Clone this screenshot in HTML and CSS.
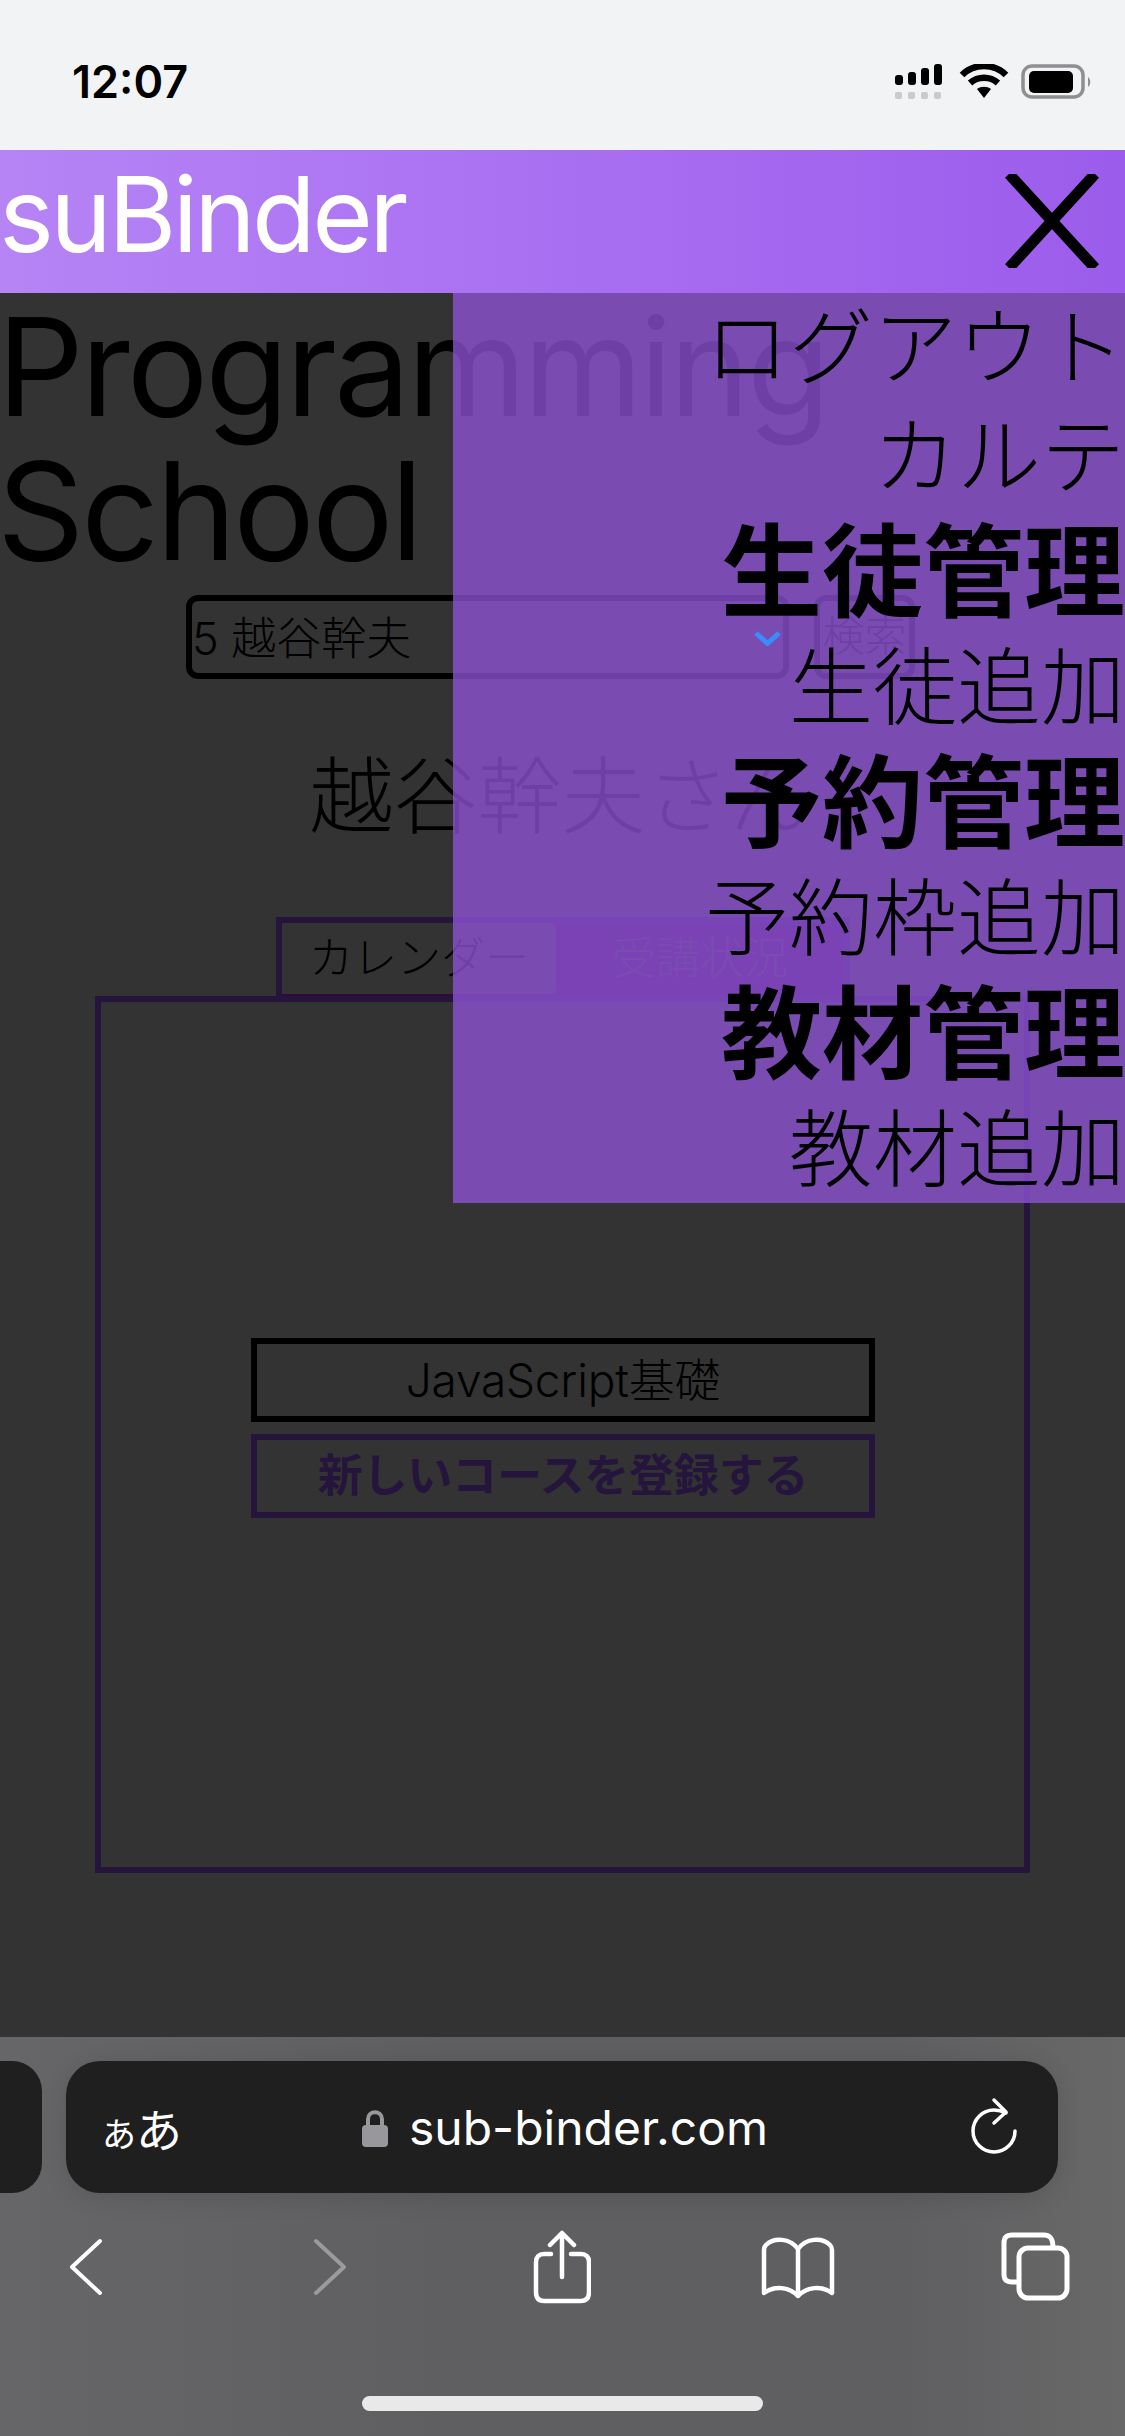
FILE: index.html
```html
<!DOCTYPE html>
<html lang="ja">
<head>
	<meta charset="utf-8">
	<title>suBinder</title>
	<link rel="stylesheet" href="styles.css">
</head>
<body>
	<div class="status">
		<span class="time">12:07</span>
		<svg class="status-icons" width="196" height="36" viewBox="0 0 196 36">
			<g fill="#000">
				<rect x="0" y="11" width="8" height="10" rx="3"/>
				<rect x="13" y="8" width="8" height="13" rx="3"/>
				<rect x="26" y="4" width="8" height="17" rx="3"/>
				<rect x="39" y="0" width="8" height="21" rx="3"/>
			</g>
			<g fill="#c9cacc">
				<rect x="0" y="28" width="7" height="7" rx="2"/>
				<rect x="13" y="28" width="7" height="7" rx="2"/>
				<rect x="26" y="28" width="7" height="7" rx="2"/>
				<rect x="39" y="28" width="7" height="7" rx="2"/>
			</g>
			<g fill="none" stroke="#000" stroke-width="6.5">
				<path d="M67 11 C79 -1 99 -1 111 11"/>
				<path d="M75 19 C83 12 95 12 103 19"/>
			</g>
			<path d="M82 25 C86 22 92 22 96 25 L89 34 Z" fill="#000"/>
			<rect x="128" y="2" width="60" height="31" rx="9" fill="none" stroke="#8f8f91" stroke-width="3.5"/>
			<rect x="134" y="7" width="44" height="22" rx="5" fill="#000"/>
			<path d="M193 13 C196 15 196 21 193 23 Z" fill="#8f8f91"/>
		</svg>
	</div>

	<header class="topbar">
		<span class="logo">suBinder</span>
		<svg class="close" width="94" height="94" viewBox="0 0 94 94">
			<path d="M4 0 L90 94 M90 0 L4 94" stroke="#000" stroke-width="11" fill="none"/>
		</svg>
	</header>

	<main class="page">
		<h1 class="title">Programming School</h1>
		<div class="search">
			<div class="select">5 越谷幹夫
				<svg class="select-arrow" width="27" height="15" viewBox="0 0 27 15">
					<path d="M2 2 L13.5 12.5 L25 2" fill="none" stroke="#3a8cf8" stroke-width="5"/>
				</svg>
			</div>
			<div class="search-btn">検索</div>
		</div>
		<h2 class="student">越谷幹夫さん</h2>
		<div class="tabs">
			<div class="tab tab-on">カレンダー</div>
			<div class="tab">受講状況</div>
		</div>
		<section class="panel">
			<div class="course">JavaScript基礎</div>
			<div class="course course-new">新しいコースを登録する</div>
		</section>

		<nav class="menu">
			<a>ログアウト</a>
			<a>カルテ</a>
			<a class="menu-head">生徒管理</a>
			<a>生徒追加</a>
			<a class="menu-head">予約管理</a>
			<a>予約枠追加</a>
			<a class="menu-head">教材管理</a>
			<a>教材追加</a>
		</nav>
	</main>

	<footer class="toolbar">
		<div class="address">
			<div class="pill-prev"></div>
			<div class="pill">
				<span class="aa"><small>あ</small>あ</span>
				<svg class="lock" width="26" height="38" viewBox="0 0 26 38">
					<path d="M6 17 V10 C6 1 20 1 20 10 V17" fill="none" stroke="#98989c" stroke-width="4"/>
					<rect x="0" y="16" width="26" height="22" rx="4" fill="#98989c"/>
				</svg>
				<span class="url">sub-binder.com</span>
				<svg class="reload" width="50" height="60" viewBox="0 0 50 60">
					<g fill="none" stroke="#fff" stroke-width="3.5" stroke-linecap="round" stroke-linejoin="round">
						<path d="M36 18 C32 16 28 15 24 15 A21 21 0 1 0 45 36"/>
						<path d="M24 5 L36 17 L24 28"/>
					</g>
				</svg>
			</div>
		</div>
		<div class="nav">
			<svg class="nav-back" width="34" height="58" viewBox="0 0 34 58">
				<path d="M31 3 L3 29 L31 55" fill="none" stroke="#fff" stroke-width="4" stroke-linecap="round" stroke-linejoin="round"/>
			</svg>
			<svg class="nav-forward" width="34" height="58" viewBox="0 0 34 58">
				<path d="M3 3 L31 29 L3 55" fill="none" stroke="#9b9b9c" stroke-width="4" stroke-linecap="round" stroke-linejoin="round"/>
			</svg>
			<svg class="nav-share" width="58" height="74" viewBox="0 0 58 74">
				<g fill="none" stroke="#fff" stroke-width="4.5" stroke-linecap="round" stroke-linejoin="round">
					<path d="M18 24 H11 C6 24 3 27 3 32 V62 C3 68 6 71 11 71 H48 C53 71 56 68 56 62 V32 C56 27 53 24 48 24 H38"/>
					<path d="M29 47 V3 M17 15 L29 3 L41 15"/>
				</g>
			</svg>
			<svg class="nav-book" width="74" height="64" viewBox="0 0 74 64">
				<g fill="none" stroke="#fff" stroke-width="4.5" stroke-linecap="round" stroke-linejoin="round">
					<path d="M37 14 C29 3 13 2 5 10 C4 11 3 13 3 15 V58 C14 50 28 52 37 61 C46 52 60 50 71 58 V15 C71 13 70 11 69 10 C61 2 45 3 37 14 V61"/>
				</g>
			</svg>
			<svg class="nav-tabs" width="70" height="70" viewBox="0 0 70 70">
				<g fill="none" stroke="#fff" stroke-width="5" stroke-linejoin="round">
					<path d="M19 50 H12 C6 50 4 47 4 42 V11 C4 6 6 3 12 3 H44 C50 3 53 6 53 16"/>
					<rect x="19" y="16" width="48" height="50" rx="9"/>
				</g>
			</svg>
		</div>
		<div class="home-bar"></div>
	</footer>
</body>
</html>
```

FILE: styles.css
```css
*{margin: 0;padding: 0;box-sizing: border-box;}
body{width: 1125px;height: 2436px;overflow: hidden;background: #333;font-family: Inter, "Noto Sans CJK JP", sans-serif;color: #000;}

.status{height: 150px;background: #f2f3f5;display: flex;justify-content: space-between;padding: 59px 34px 0 72px;}
.time{font-size: 45px;font-weight: 600;line-height: 46px;}
.status-icons{margin-top: 5px;}

.topbar{height: 143px;background: linear-gradient(90deg, #b684f5, #a96ff2 50%, #9b5ceb);display: flex;justify-content: space-between;align-items: center;padding-right: 26px;}
.logo{font-size: 104px;letter-spacing: -3.6px;color: #fff;font-weight: 400;line-height: 129px;height: 143px;margin-left: -1px;}
.close{margin-top: -1px;}

.page{height: 1744px;position: relative;background: #333;}
.title{font-size: 136px;font-weight: 375;letter-spacing: -3px;line-height: 144px;width: 900px;height: 302px;margin-left: -3px;padding-top: 2px;}

.search{display: flex;padding-left: 186px;gap: 25px;}
.select{width: 603px;height: 84px;border: 6px solid #000;border-radius: 12px;font-size: 45px;font-weight: 300;line-height: 76px;}
.select-arrow{position: absolute;left: 754px;top: 338px;z-index: 2;}
.search-btn{width: 101px;height: 84px;border: 6px solid #000;border-radius: 12px;font-size: 42px;font-weight: 300;line-height: 70px;text-align: center;}

.student{font-size: 84px;font-weight: 300;line-height: 120px;text-align: center;margin-top: 58px;padding-right: 2px;height: 120px;}

.tabs{width: 574px;height: 85px;margin: 60px 0 0 276px;border: 6px solid #25143c;border-bottom: none;background: #30083a;display: flex;}
.tab{width: 290px;height: 71px;font-size: 44px;font-weight: 300;line-height: 70px;text-align: center;color: #333;}
.tab-on{width: 276px;background: #333;color: #000;border-radius: 0 5px 5px 0;}

.panel{width: 935px;height: 877px;margin: -6px 0 0 95px;border: 6px solid #25143c;background: #333;padding-top: 336px;position: relative;}
.course{width: 624px;height: 84px;margin: 0 0 12px 150px;border: 6px solid #000;font-size: 46px;letter-spacing: -.2px;font-weight: 300;line-height: 72px;text-align: center;}
.course-new{border-color: #25143c;color: #25143c;font-weight: 700;font-size: 45px;}

.menu{position: absolute;top: 0;right: 0;width: 672px;height: 910px;background: rgba(147, 86, 222, .75);z-index: 1;display: flex;flex-direction: column;text-align: right;}
.menu a{font-size: 84px;font-weight: 300;line-height: 109px;height: 109px;}
.menu .menu-head{font-size: 101px;font-weight: 700;line-height: 122px;height: 122px;}

.toolbar{height: 399px;background: linear-gradient(90deg, #666668, #5f5f61 40%, #5f5f61 80%, #686869);padding-top: 24px;}
.address{display: flex;gap: 24px;height: 132px;}
.pill-prev{width: 42px;background: #1f1f1f;border-radius: 0 30px 30px 0;}
.pill{width: 992px;background: #1f1f1f;border-radius: 34px;display: flex;align-items: center;color: #fff;box-shadow: 0 4px 24px rgba(0, 0, 0, .12);}
.aa{font-size: 46px;font-weight: 400;margin-left: 36px;width: 260px;font-family: "Noto Sans CJK JP", sans-serif;}
.aa small{font-size: 34px;}
.lock{margin-top: 2px;}
.url{font-size: 48px;margin-left: 21px;width: 561px;}
.reload{margin-top: -4px;}

.nav{display: flex;align-items: center;height: 74px;margin-top: 37px;padding-left: 69px;}
.nav-forward{margin-left: 210px;}
.nav-share{margin-left: 186px;}
.nav-book{margin-left: 170px;}
.nav-tabs{margin-left: 165px;}

.home-bar{width: 401px;height: 15px;margin: 92px auto 0;background: #e9e9e9;border-radius: 8px;}
```
